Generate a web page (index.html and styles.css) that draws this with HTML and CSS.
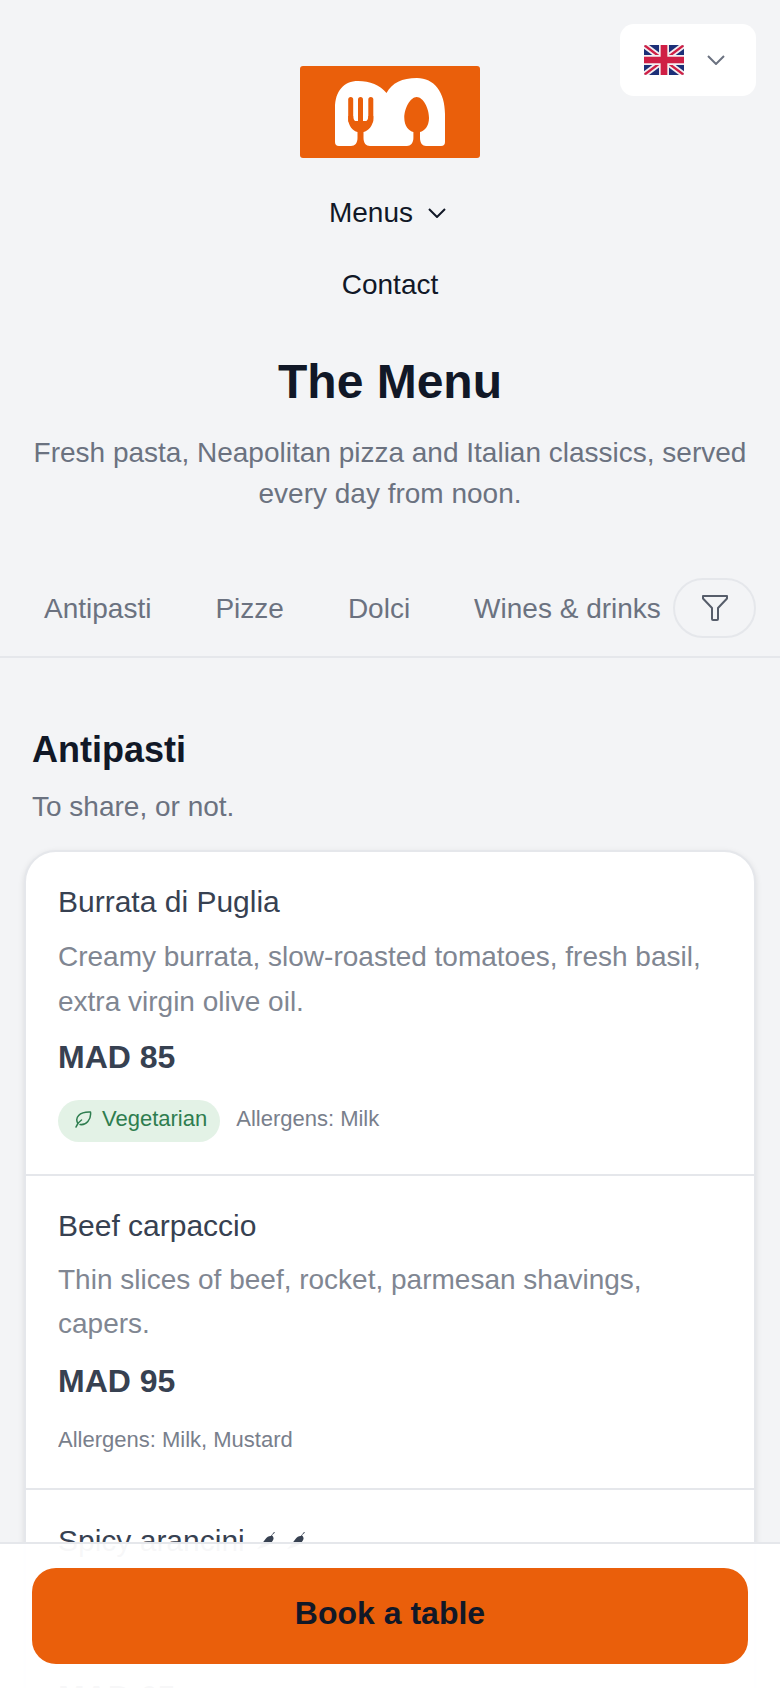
FILE: index.html
```html
<!DOCTYPE html>
<html lang="en">
<head>
<meta charset="utf-8">
<title>The Menu</title>
<link rel="stylesheet" href="styles.css">
</head>
<body>
<header class="top">
  <button class="lang">
    <svg class="flag" viewBox="0 0 60 45" width="40" height="30">
      <rect width="60" height="45" fill="#1c2f78"/>
      <path d="M0 0L60 45M60 0L0 45" stroke="#f3eef0" stroke-width="9"/>
      <path d="M0 0L60 45M60 0L0 45" stroke="#cf1f45" stroke-width="3.500"/>
      <path d="M30 0V45M0 22.500H60" stroke="#f3eef0" stroke-width="15"/>
      <path d="M30 0V45M0 22.500H60" stroke="#cf1f45" stroke-width="10"/>
    </svg>
    <svg class="chev chev-grey" viewBox="0 0 18 10" width="18" height="10"><path d="M1 1l8 8 8-8"/></svg>
  </button>
  <div class="logo">
    <svg viewBox="0 0 180 92" width="180" height="92">
      <rect width="180" height="92" rx="3" fill="#ea5f0b"/>
      <path d="M35 76V42C35 25 44 15 58 15C70 15 80 19 86.500 27C92 17 102 12 117 12C134 12 145 26 145 48V76a4 4 0 0 1-4 4H39a4 4 0 0 1-4-4Z" fill="#fff"/>
      <g fill="#ea5f0b">
        <rect x="48.200" y="31" width="5" height="26" rx="2.500"/>
        <rect x="58" y="31" width="5" height="26" rx="2.500"/>
        <rect x="68.300" y="31" width="5" height="26" rx="2.500"/>
        <path d="M48.200 50H53.200C53.200 54 55 55 55.500 55H66C66.500 55 68.300 54 68.300 50H73.300V52C73.300 60 68 65 63.500 66V72C63.500 77 66 80 70 80V81H51V80C55 80 57.500 77 57.500 72V66C53 65 48.200 60 48.200 52Z"/>
        <path d="M116.700 31C123 31 129 42 129 52C129 60 124.500 65 120 66V72C120 77 122.500 80 126 80V81H107V80C110.500 80 113.400 77 113.400 72V66C109 65 104.300 60 104.300 52C104.300 42 110.500 31 116.700 31Z"/>
      </g>
    </svg>
  </div>
  <nav class="nav">
    <a class="nav-link nav-link-menu">Menus <svg class="chev chev-dark" viewBox="0 0 18 10" width="18" height="10"><path d="M1 1l8 8 8-8"/></svg></a>
    <a class="nav-link">Contact</a>
  </nav>
</header>
<section class="hero">
  <h1>The Menu</h1>
  <p>Fresh pasta, Neapolitan pizza and Italian classics, served every day from noon.</p>
</section>
<div class="tabs">
  <a class="tab">Antipasti</a>
  <a class="tab">Pizze</a>
  <a class="tab">Dolci</a>
  <a class="tab">Wines &amp; drinks</a>
  <button class="filter">
    <svg viewBox="0 0 28 28" width="28" height="28"><path d="M2 2H26V4.500L17 14V25a1 1 0 0 1-1 1H12a1 1 0 0 1-1-1V14L2 4.500Z"/></svg>
  </button>
</div>
<main class="section">
  <h2>Antipasti</h2>
  <p class="lead">To share, or not.</p>
  <div class="card">
    <article class="item">
      <h3>Burrata di Puglia</h3>
      <p class="desc">Creamy burrata, slow-roasted tomatoes, fresh basil, extra virgin olive oil.</p>
      <div class="price">MAD 85</div>
      <div class="meta">
        <span class="badge"><svg viewBox="0 0 18 18" width="18" height="18"><path d="M2 17C3 14 4.500 12 7.500 10M4 13.500C0.500 8 5 1.500 16.500 2C17.500 9.500 12 15.500 6 14.500"/></svg>Vegetarian</span>
        <span class="allergens">Allergens: Milk</span>
      </div>
    </article>
    <article class="item">
      <h3>Beef carpaccio</h3>
      <p class="desc">Thin slices of beef, rocket, parmesan shavings, capers.</p>
      <div class="price">MAD 95</div>
      <div class="meta"><span class="allergens">Allergens: Milk, Mustard</span></div>
    </article>
    <article class="item">
      <h3>Spicy arancini <svg class="chili" viewBox="0 0 18 18" width="18" height="18"><path d="M18 0.500L14.800 3.200C16 4 16.800 5.500 16.500 7C15 12 8 16 0 17C3.500 14 6 10 8.500 7C10 5 12 3.800 13.800 4L17 0Z"/></svg><svg class="chili" viewBox="0 0 18 18" width="18" height="18"><path d="M18 0.500L14.800 3.200C16 4 16.800 5.500 16.500 7C15 12 8 16 0 17C3.500 14 6 10 8.500 7C10 5 12 3.800 13.800 4L17 0Z"/></svg></h3>
      <p class="desc">Crisp saffron rice balls with a spicy tomato and chilli sauce, mozzarella heart.</p>
      <div class="price">MAD 65</div>
    </article>
  </div>
</main>
<footer class="cta">
  <a class="book">Book a table</a>
</footer>
</body>
</html>
```
FILE: styles.css
```css
* { box-sizing: border-box; }
html, body { margin: 0; padding: 0; }
body { background: #f3f4f6; color: #111827; font-family: "Liberation Sans", Arial, sans-serif; width: 780px; overflow-x: hidden; }
.top { position: relative; display: flex; flex-direction: column; align-items: center; padding-top: 66px; }
.lang { position: absolute; top: 24px; right: 24px; width: 136px; height: 72px; background: #fff; border: 0; border-radius: 14px; display: flex; align-items: center; gap: 23px; padding: 0 0 0 24px; }
.flag { display: block; border-radius: 2px; }
.chev { fill: none; stroke-width: 2; display: block; }
.chev-grey { stroke: #6b7280; }
.chev-dark { stroke: #111827; }
.logo { height: 92px; }
.logo svg { display: block; }
.nav { display: flex; flex-direction: column; align-items: center; margin-top: 19px; }
.nav-link { font-size: 28px; line-height: 36px; padding: 18px 0; display: flex; align-items: center; gap: 15px; color: #111827; }
.nav-link-menu { margin-right: 5px; }
.hero { text-align: center; padding: 0 30px; margin-top: 31px; }
.hero h1 { font-size: 48px; line-height: 60px; margin: 0; font-weight: 700; color: #111827; }
.hero p { font-size: 28px; line-height: 41px; margin: 20px 0 0; color: #6b7280; }
.tabs { display: flex; align-items: center; height: 100px; margin-top: 44px; border-bottom: 2px solid #e5e7eb; padding: 4px 24px 0 44px; gap: 64px; position: relative; }
.tab { font-size: 28px; color: #6b7280; white-space: nowrap; }
.filter { position: absolute; right: 24px; top: 20px; width: 83px; height: 60px; border-radius: 30px; background: #f3f4f6; border: 2px solid #e5e7eb; display: flex; align-items: center; justify-content: center; padding: 0; }
.filter svg { fill: none; stroke: #565d6a; stroke-width: 2; stroke-linejoin: round; }
.section { padding: 70px 24px 0; }
.section h2 { font-size: 36px; line-height: 44px; margin: 0 0 0 8px; font-weight: 700; color: #111827; }
.lead { font-size: 28px; line-height: 36px; margin: 17px 0 0 8px; color: #6b7280; }
.card { background: #fff; border: 2px solid #e5e7eb; border-radius: 32px; margin-top: 25px; box-shadow: 0 2px 6px rgba(0,0,0,.1); overflow: hidden; }
.item { padding: 30px 32px 32px; border-bottom: 2px solid #e5e7eb; }
.item:last-child { border-bottom: 0; padding-top: 31px; }
.item h3 { font-size: 30px; line-height: 40px; margin: 0; font-weight: 400; color: #374151; }
.chili { fill: #374151; margin: 0 8px 0 4px; vertical-align: 1px; }
.desc { font-size: 28px; line-height: 44.800px; margin: 12px 0 0; color: #6b7280; opacity: .85; }
.item:first-child .desc { margin-top: 13px; }
.price { font-size: 32px; line-height: 40px; font-weight: 700; color: #374151; margin-top: 14px; }
.item:first-child .price { margin-top: 12px; }
.meta { display: flex; align-items: center; gap: 16px; margin-top: 23px; }
.badge { display: inline-flex; align-items: center; gap: 10px; background: #e3f2e6; color: #2e7d4f; font-size: 22px; height: 42px; padding: 0 13px 3px 16px; border-radius: 21px; }
.badge svg { fill: none; stroke: #2e7d4f; stroke-width: 1.500; stroke-linecap: round; stroke-linejoin: round; }
.allergens { font-size: 22px; line-height: 32px; color: #6b7280; opacity: .9; }
.badge + .allergens { margin-bottom: 3px; }
.cta { position: fixed; left: 0; right: 0; bottom: 0; height: 146px; background: rgba(255,255,255,.96); border-top: 2px solid #e5e7eb; padding: 24px 32px 0; }
.book { display: flex; align-items: center; justify-content: center; height: 96px; padding-bottom: 6px; background: #ea5f0b; border-radius: 24px; font-size: 32px; font-weight: 700; color: #111827; }
```
